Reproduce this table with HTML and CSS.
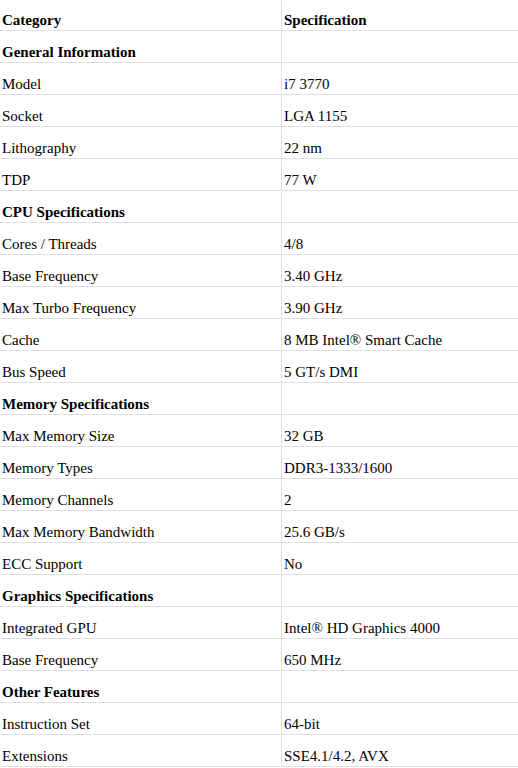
FILE: index.html
```html
<!DOCTYPE html>
<html lang="en">
<head>
  <meta charset="UTF-8" />
  <meta name="viewport" content="width=device-width, initial-scale=1.0"/>
  <title>i7 3770 Specifications</title>
  <link rel="stylesheet" href="styles.css">
</head>
<body>
  <table class="spec-table">
    <thead>
      <tr>
        <th>Category</th>
        <th>Specification</th>
      </tr>
    </thead>
    <tbody>
      <!-- General -->
      <tr class="section"><td>General Information</td><td></td></tr>
      <tr><td>Model</td><td>i7 3770</td></tr>
      <tr><td>Socket</td><td>LGA 1155</td></tr>
      <tr><td>Lithography</td><td>22 nm</td></tr>
      <tr><td>TDP</td><td>77 W</td></tr>

      <!-- CPU -->
      <tr class="section"><td>CPU Specifications</td><td></td></tr>
      <tr><td>Cores / Threads</td><td>4/8</td></tr>
      <tr><td>Base Frequency</td><td>3.40 GHz</td></tr>
      <tr><td>Max Turbo Frequency</td><td>3.90 GHz</td></tr>
      <tr><td>Cache</td><td>8 MB Intel® Smart Cache</td></tr>
      <tr><td>Bus Speed</td><td>5 GT/s DMI</td></tr>

      <!-- Memory -->
      <tr class="section"><td>Memory Specifications</td><td></td></tr>
      <tr><td>Max Memory Size</td><td>32 GB</td></tr>
      <tr><td>Memory Types</td><td>DDR3-1333/1600</td></tr>
      <tr><td>Memory Channels</td><td>2</td></tr>
      <tr><td>Max Memory Bandwidth</td><td>25.6 GB/s</td></tr>
      <tr><td>ECC Support</td><td>No</td></tr>

      <!-- Graphics -->
      <tr class="section"><td>Graphics Specifications</td><td></td></tr>
      <tr><td>Integrated GPU</td><td>Intel® HD Graphics 4000</td></tr>
      <tr><td>Base Frequency</td><td>650 MHz</td></tr>

      <!-- Other -->
      <tr class="section"><td>Other Features</td><td></td></tr>
      <tr><td>Instruction Set</td><td>64-bit</td></tr>
      <tr><td>Extensions</td><td>SSE4.1/4.2, AVX</td></tr>
    </tbody>
  </table>
</body>
</html>
```

FILE: styles.css
```css
body {
  font-family: "Liberation Serif", "Times New Roman", serif;
  font-size: 15px;
  color: #000;
  margin: 0;
  background: #fff;
}

.spec-table {
  width: 100%;
  border-collapse: separate;
  border-spacing: 0;
  margin-top: -1px;
}

.spec-table th,
.spec-table td {
  text-align: left;
  padding: 13px 2px 1px;
  line-height: 17px;
  border-bottom: 1px solid #e0e0e0;
}

.spec-table th:first-child,
.spec-table td:first-child {
  width: 277px;
  border-right: 1px solid #e0e0e0;
}

.spec-table th,
.section td {
  font-weight: bold;
}
```
